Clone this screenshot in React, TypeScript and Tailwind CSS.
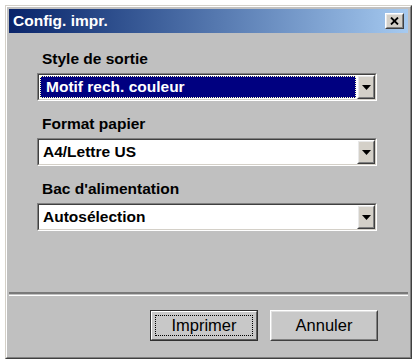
import React from "react";

const font = { fontFamily: '"Liberation Sans", Arial, sans-serif' };

function Arrow() {
  return (
    <svg width="9" height="5" viewBox="0 0 9 5">
      <path d="M0 0 H9 L4.5 5 Z" fill="#000" />
    </svg>
  );
}

function DropBtn() {
  return (
    <div className="w-[18px] h-full border border-t-white border-l-white border-b-[#404040] border-r-[#404040]">
      <div className="w-full h-full bg-[#d4d0c8] border border-t-[#e8e8e8] border-l-[#e8e8e8] border-b-[#808080] border-r-[#808080] flex items-center justify-center">
        <Arrow />
      </div>
    </div>
  );
}

function Select({ value, focused }: { value: string; focused?: boolean }) {
  return (
    <div className="w-[340px] h-[28px] border border-t-[#808080] border-l-[#808080] border-b-white border-r-white">
      <div className="w-full h-full border border-t-[#404040] border-l-[#404040] border-b-[#d4d0c8] border-r-[#d4d0c8] bg-white flex">
        <div className="flex-1 flex items-stretch p-[1px]">
          {focused ? (
            <div className="flex-1 bg-[#000080] border border-dotted border-[#ffffc0] flex items-center pl-[5px] text-white font-bold text-[15.5px] leading-none">
              {value}
            </div>
          ) : (
            <div className="flex-1 flex items-center pl-[3px] text-black font-bold text-[15.5px] leading-none">
              {value}
            </div>
          )}
        </div>
        <DropBtn />
      </div>
    </div>
  );
}

function Field({ label, value, focused }: { label: string; value: string; focused?: boolean }) {
  return (
    <div className="flex flex-col">
      <div className="pl-[5px] h-[16px] leading-[16px] text-[15.5px] font-bold text-black mb-[6px]">{label}</div>
      <Select value={value} focused={focused} />
    </div>
  );
}

function Button({ label, isDefault }: { label: string; isDefault?: boolean }) {
  return (
    <div
      className={
        "w-[108px] h-[31px] " +
        (isDefault ? "border border-[#303030]" : "border border-t-white border-l-white border-b-[#404040] border-r-[#404040]")
      }
    >
      <div
        className={
          "w-full h-full bg-[#c8c8c8] border " +
          (isDefault
            ? "border-t-white border-l-white border-b-[#606060] border-r-[#606060] p-[3px]"
            : "border-t-[#e0e0e0] border-l-[#e0e0e0] border-b-[#808080] border-r-[#808080] p-[3px]")
        }
      >
        <div
          className={
            "w-full h-full flex items-center justify-center text-[16.5px] text-black leading-none border " +
            (isDefault ? "border-dotted border-black" : "border-transparent")
          }
        >
          {label}
        </div>
      </div>
    </div>
  );
}

export default function App() {
  return (
    <div className="w-[415px] h-[362px] bg-white pt-[5px] pl-[5px]" style={font}>
      <div className="w-[407px] h-[354px] border border-t-[#d4d0c8] border-l-[#d4d0c8] border-b-[#404040] border-r-[#404040]">
        <div className="w-full h-full border border-t-white border-l-white border-b-[#808080] border-r-[#808080] bg-[#c0c0c0] p-[2px] flex flex-col">
          <div className="h-[24px] flex items-center justify-between bg-gradient-to-r from-[#0a246a] to-[#a6caf0]">
            <div className="pl-[4px] text-white font-bold text-[15.5px] leading-none">Config. impr.</div>
            <div className="mr-[4px] w-[19px] h-[16px] border border-t-white border-l-white border-b-[#404040] border-r-[#404040]">
              <div className="w-full h-full bg-[#d4d0c8] border border-t-[#e8e8e8] border-l-[#e8e8e8] border-b-[#808080] border-r-[#808080] flex items-center justify-center">
                <svg width="9" height="8" viewBox="0 0 9 8">
                  <path d="M1 0.5 L8 7.5 M8 0.5 L1 7.5" stroke="#000" strokeWidth="1.8" />
                </svg>
              </div>
            </div>
          </div>
          <div className="flex-1 flex flex-col pl-[28px] pt-[18px] gap-[15px]">
            <Field label="Style de sortie" value="Motif rech. couleur" focused />
            <Field label="Format papier" value="A4/Lettre US" />
            <Field label="Bac d'alimentation" value="Autosélection" />
          </div>
          <div className="h-[2px] bg-[#7a7a7a]" />
          <div className="h-[1px] bg-[#c0c0c0]" />
          <div className="h-[1px] bg-white" />
          <div className="h-[59px] flex justify-end items-start pt-[14px] pr-[30px] gap-[12px]">
            <Button label="Imprimer" isDefault />
            <Button label="Annuler" />
          </div>
        </div>
      </div>
    </div>
  );
}
